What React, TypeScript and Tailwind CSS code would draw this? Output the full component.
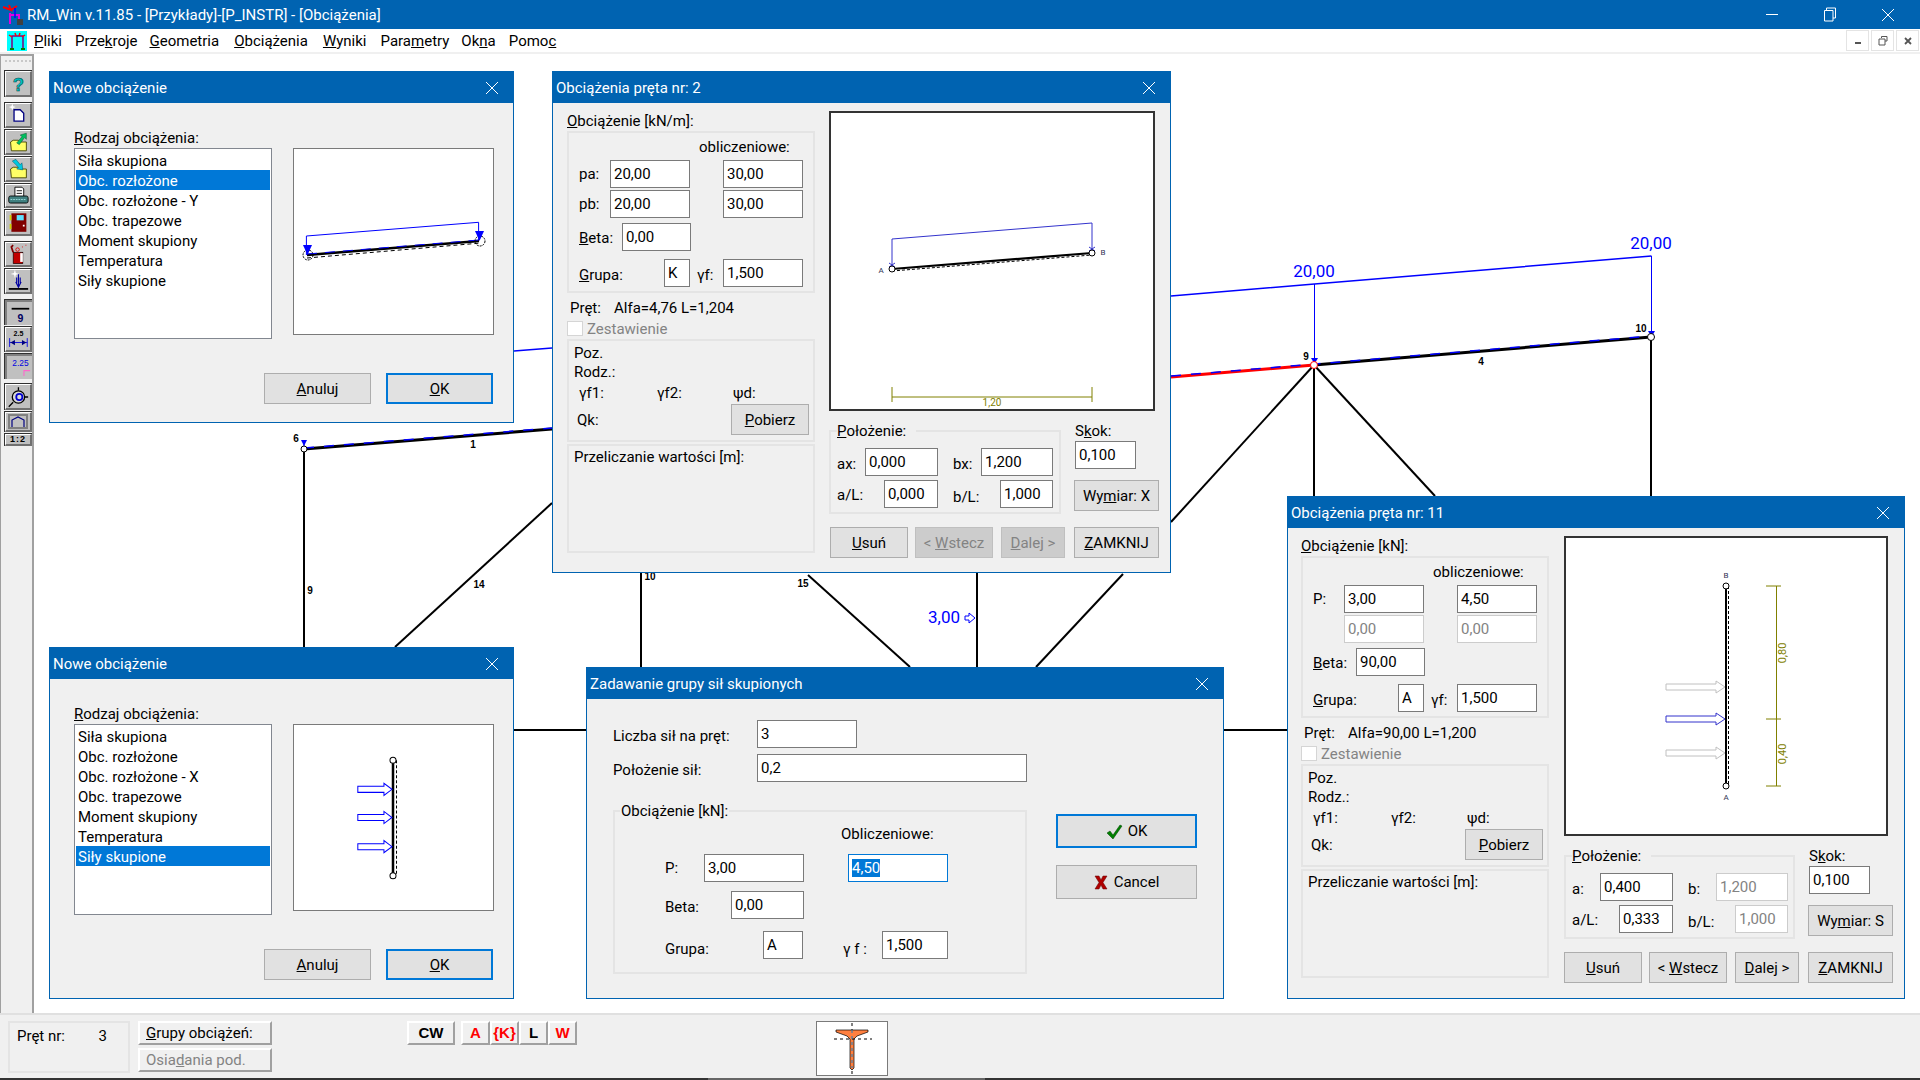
import React from 'react';

const BLUE = '#0000ff';

const Close = () => (
  <svg width="14" height="14" viewBox="0 0 14 14" className="block">
    <path d="M1 1 L13 13 M13 1 L1 13" stroke="white" strokeWidth="1" fill="none" />
  </svg>
);

// Title bar + frame shared by every dialog
const Dialog = ({ className, title, children }: { className: string; title: string; children: React.ReactNode }) => (
  <div className={`absolute bg-[#f0f0f0] border border-[#0063b1] ${className}`}>
    <div className="flex h-[31px] items-center justify-between bg-[#0063b1] pl-[3px] text-[15px] text-white">
      <span className="pt-px">{title}</span>
      <span className="flex w-[42px] justify-center"><Close /></span>
    </div>
    {children}
  </div>
);

const Field = ({ w, value, state, mark }: { w: string; value: string; state?: 'off' | 'focus'; mark?: boolean }) => (
  <div
    className={`h-[28px] shrink-0 border bg-white pl-[3px] leading-[26px] ${w} ${
      state === 'off' ? 'border-[#cccccc] text-[#838383]' : state === 'focus' ? 'border-[#0078d7]' : 'border-[#7a7a7a]'
    }`}
  >
    {mark ? <span className="bg-[#0078d7] text-white">{value}</span> : value}
  </div>
);

const Btn = ({ className, children, off, main }: { className: string; children: React.ReactNode; off?: boolean; main?: boolean }) => (
  <div
    className={`flex shrink-0 items-center justify-center pt-px ${className} ${
      off
        ? 'border border-[#bfbfbf] bg-[#cccccc] text-[#838383]'
        : main
          ? 'border-2 border-[#0078d7] bg-[#e1e1e1]'
          : 'border border-[#adadad] bg-[#e1e1e1]'
    }`}
  >
    {children}
  </div>
);

const Group = ({ className, children }: { className: string; children: React.ReactNode }) => (
  <div className={`relative border-2 border-[#e4e4e4] ${className}`}>{children}</div>
);

const Preview = ({ className, box, children }: { className: string; box: string; children: React.ReactNode }) => (
  <div className={`bg-white ${className}`}>
    <svg viewBox={box} className="block h-full w-full">{children}</svg>
  </div>
);

const arrow = (x0: number, xh: number, xe: number, y: number) =>
  `${x0},${y - 3} ${xh},${y - 3} ${xh},${y - 6} ${xe},${y} ${xh},${y + 6} ${xh},${y + 3} ${x0},${y + 3}`;

const NEW_TYPES_A = ['Siła skupiona', 'Obc. rozłożone', 'Obc. rozłożone - Y', 'Obc. trapezowe', 'Moment skupiony', 'Temperatura', 'Siły skupione'];
const NEW_TYPES_C = ['Siła skupiona', 'Obc. rozłożone', 'Obc. rozłożone - X', 'Obc. trapezowe', 'Moment skupiony', 'Temperatura', 'Siły skupione'];

const NewLoad = ({ className, items, selected, box, children }: { className: string; items: string[]; selected: number; box: string; children: React.ReactNode }) => (
  <Dialog className={`left-[49px] h-[352px] w-[465px] ${className}`} title="Nowe obciążenie">
    <div className="pl-[24px] pt-[25px]">
      <div className="h-[20px] leading-[20px]"><u>R</u>odzaj obciążenia:</div>
      <div className="flex items-start gap-[21px]">
        <div className="h-[191px] w-[198px] border border-[#828790] bg-white p-px">
          {items.map((item, i) => (
            <div key={item} className={`h-[20px] pl-[2px] leading-[22px] ${i === selected ? 'bg-[#0078d7] text-white' : ''}`}>{item}</div>
          ))}
        </div>
        <Preview className="h-[187px] w-[201px] border border-[#7a7a7a]" box={box}>{children}</Preview>
      </div>
      <div className="ml-[190px] mt-[34px] flex gap-[15px]">
        <Btn className="h-[31px] w-[107px]"><span><u>A</u>nuluj</span></Btn>
        <Btn className="h-[31px] w-[107px]" main><span><u>O</u>K</span></Btn>
      </div>
    </div>
  </Dialog>
);

type LoadProps = {
  className: string;
  title: string;
  unit: string;
  sym: [string, string];
  vals: [string, string, string, string];
  second: 'on' | 'off';
  beta: string;
  grupa: string;
  bar: string;
  rightW: string;
  posW: string;
  labels: [string, string];
  pos: [string, string, string, string];
  bOff?: boolean;
  wymiar: string;
  navOff?: boolean;
  box: string;
  pl: string;
  children: React.ReactNode;
};

const LoadWindow = (p: LoadProps) => (
  <Dialog className={p.className} title={p.title}>
    <div className={`flex pt-[8px] ${p.pl}`}>
      {/* Left column */}
      <div className="w-[248px] shrink-0">
        <div className="h-[20px] leading-[20px]"><u>O</u>bciążenie [{p.unit}]:</div>
        <Group className="h-[162px]">
          <div className="pl-[130px] pt-[4px] leading-[20px]">obliczeniowe:</div>
          <div className="mt-[3px] flex items-center pl-[10px]">
            <span className="w-[31px] pt-px">{p.sym[0]}</span>
            <Field w="w-[80px]" value={p.vals[0]} />
            <span className="w-[33px]" />
            <Field w="w-[80px]" value={p.vals[1]} />
          </div>
          <div className="mt-[2px] flex items-center pl-[10px]">
            <span className="w-[31px] pt-px">{p.sym[1]}</span>
            <Field w="w-[80px]" value={p.vals[2]} state={p.second === 'off' ? 'off' : undefined} />
            <span className="w-[33px]" />
            <Field w="w-[80px]" value={p.vals[3]} state={p.second === 'off' ? 'off' : undefined} />
          </div>
          <div className="mt-[5px] flex items-center pl-[10px]">
            <span className="w-[43px] pt-[3px]"><u>B</u>eta:</span>
            <Field w="w-[69px]" value={p.beta} />
          </div>
          <div className="mt-[8px] flex items-center pl-[10px]">
            <span className="w-[85px] pt-[4px]"><u>G</u>rupa:</span>
            <Field w="w-[26px]" value={p.grupa} />
            <span className="w-[33px] pl-[7px] pt-[4px]">γf:</span>
            <Field w="w-[80px]" value="1,500" />
          </div>
        </Group>
        <div className="mt-[5px] flex h-[20px] pl-[3px] leading-[20px]">
          <span className="w-[44px]">Pręt:</span>
          <span>{p.bar}</span>
        </div>
        <div className="mt-[3px] flex h-[15px] items-center">
          <span className="h-[15px] w-[16px] border border-[#d5d5d5] bg-white" />
          <span className="ml-[4px] pt-px text-[#838383]">Zestawienie</span>
        </div>
        <Group className="mt-[3px] h-[103px] pl-[5px] pt-[2px]">
          <div className="h-[20px] leading-[20px]">Poz.</div>
          <div className="h-[19px] leading-[19px]">Rodz.:</div>
          <div className="mt-px flex h-[20px] pl-[5px] leading-[20px]">
            <span className="w-[78px]">γf1:</span>
            <span className="w-[76px]">γf2:</span>
            <span>ψd:</span>
          </div>
          <div className="mt-px flex items-center justify-between pl-[3px] pr-[4px]">
            <span className="pt-[2px]">Qk:</span>
            <Btn className="h-[31px] w-[78px]"><span><u>P</u>obierz</span></Btn>
          </div>
        </Group>
        <Group className="mt-[2px] h-[109px] pl-[5px] pt-px">
          <div className="leading-[20px]">Przeliczanie wartości [m]:</div>
        </Group>
      </div>

      {/* Right column */}
      <div className="ml-[14px] shrink-0">
        <Preview className={`h-[300px] border-2 border-[#333333] ${p.rightW}`} box={p.box}>{p.children}</Preview>
        <div className="mt-[19px] flex">
          <div className={`relative h-[84px] border-2 border-[#e4e4e4] pl-[6px] pt-[16px] ${p.posW}`}>
            <span className="absolute -top-[11px] left-[6px] bg-[#f0f0f0] pr-[10px] leading-[20px]"><u>P</u>ołożenie:</span>
            <div className="flex">
              <div className="flex w-[101px] items-center justify-between">
                <span className="pt-[5px]">{p.labels[0]}:</span>
                <Field w="w-[73px]" value={p.pos[0]} />
              </div>
              <div className="ml-[15px] flex w-[100px] items-center justify-between">
                <span className="pt-[5px]">{p.labels[1]}:</span>
                <Field w="w-[72px]" value={p.pos[1]} state={p.bOff ? 'off' : undefined} />
              </div>
            </div>
            <div className="mt-[3px] flex">
              <div className="flex w-[101px] items-center justify-between">
                <span className="pt-[2px]">a/L:</span>
                <Field w="w-[54px]" value={p.pos[2]} />
              </div>
              <div className="ml-[15px] flex w-[100px] items-center justify-between">
                <span className="pt-[7px]">b/L:</span>
                <Field w="w-[53px]" value={p.pos[3]} state={p.bOff ? 'off' : undefined} />
              </div>
            </div>
          </div>
          <div className="-mt-[9px] ml-[14px]">
            <div className="h-[20px] leading-[20px]">S<u>k</u>ok:</div>
            <Field w="w-[61px]" value="0,100" />
            <Btn className="-ml-px mt-[11px] h-[31px] w-[85px]"><span>Wy<u>m</u>iar: {p.wymiar}</span></Btn>
          </div>
        </div>
        <div className="ml-px mt-[13px] flex">
          <Btn className="h-[31px] w-[78px]"><span><u>U</u>suń</span></Btn>
          <Btn className="ml-[7px] h-[31px] w-[78px]" off={p.navOff}><span>&lt; <u>W</u>stecz</span></Btn>
          <Btn className="ml-[8px] h-[31px] w-[64px]" off={p.navOff}><span><u>D</u>alej &gt;</span></Btn>
          <Btn className="ml-[9px] h-[31px] w-[85px]"><span><u>Z</u>AMKNIJ</span></Btn>
        </div>
      </div>
    </div>
  </Dialog>
);

// Structure drawn behind the dialogs, in page coordinates
const Structure = () => (
  <svg viewBox="34 54 1886 959" className="block h-full w-full">
    <g stroke="#000" strokeWidth="2" fill="none">
      <line x1="304" y1="448" x2="304" y2="647" />
      <line x1="552" y1="503" x2="395" y2="647" />
      <line x1="641" y1="573" x2="641" y2="667" />
      <line x1="808" y1="575" x2="910" y2="667" />
      <line x1="977" y1="573" x2="977" y2="667" />
      <line x1="1123" y1="574" x2="1036" y2="667" />
      <line x1="514" y1="730" x2="586" y2="730" />
      <line x1="1224" y1="730" x2="1287" y2="730" />
      <line x1="1314" y1="365" x2="1171" y2="522" />
      <line x1="1314" y1="365" x2="1314" y2="496" />
      <line x1="1314" y1="365" x2="1435" y2="496" />
      <line x1="1651" y1="337" x2="1651" y2="496" />
    </g>
    <line x1="304" y1="449" x2="552" y2="429" stroke="#000" strokeWidth="3" />
    <line x1="304" y1="448" x2="552" y2="428" stroke={BLUE} strokeWidth="1.5" strokeDasharray="10 10" />
    <line x1="1171" y1="377" x2="1314" y2="365" stroke="#ff0000" strokeWidth="3" />
    <line x1="1314" y1="365" x2="1651" y2="337" stroke="#000" strokeWidth="3" />
    <line x1="1171" y1="376" x2="1651" y2="336" stroke={BLUE} strokeWidth="1.5" strokeDasharray="10 10" />
    <g stroke={BLUE} fill="none">
      <polyline points="514,351 552,348" strokeWidth="1.5" />
      <polyline points="1171,296 1314.5,284 1651.5,256" strokeWidth="1.5" />
      <line x1="304" y1="441" x2="304" y2="448" />
      <line x1="1314.5" y1="284" x2="1314.5" y2="362" />
      <line x1="1651.5" y1="256" x2="1651.5" y2="335" />
    </g>
    <g fill={BLUE}>
      <polygon points="301,440 307,440 304,446" />
      <polygon points="1311,358 1318,358 1314.5,364" />
      <polygon points="1648,331 1655,331 1651.5,337" />
    </g>
    <circle cx="304" cy="449" r="3" fill="#fff" stroke="#000" />
    <circle cx="1314" cy="365" r="3.5" fill="#fff" stroke="#ff0000" />
    <circle cx="1651" cy="337" r="3.5" fill="#fff" stroke="#000" />
    <g fontFamily="Liberation Sans, sans-serif" fontSize="10" fontWeight="700" textAnchor="middle" fill="#000">
      <text x="296" y="442">6</text>
      <text x="473" y="448">1</text>
      <text x="310" y="594">9</text>
      <text x="479" y="588">14</text>
      <text x="650" y="580">10</text>
      <text x="803" y="587">15</text>
      <text x="1306" y="360">9</text>
      <text x="1641" y="332">10</text>
      <text x="1481" y="365">4</text>
    </g>
    <g fontFamily="Roboto, sans-serif" fontSize="17" textAnchor="middle" fill={BLUE}>
      <text x="1314" y="277">20,00</text>
      <text x="1651" y="249">20,00</text>
      <text x="944" y="623">3,00</text>
    </g>
    <polygon points="965,616 969,616 969,613 975,618 969,623 969,620 965,620" fill="none" stroke={BLUE} />
  </svg>
);

// Toolbar icons, drawn on a 24x24 box
const Folder = () => <path d="M3 12 L6 10 H12 L14 12 H21 V22 H4 Z" fill="#ffff66" stroke="#404000" strokeWidth="1" />;
const ICONS: Record<string, React.ReactNode> = {
  help: <text x="12" y="20" textAnchor="middle" fontFamily="Liberation Sans, sans-serif" fontSize="21" fontWeight="700" fill="#00c0c0" stroke="#004040" strokeWidth="0.6">?</text>,
  new: (
    <g>
      <path d="M7 6 H14 L18 10 V19 H7 Z" fill="#fff" stroke="#000080" strokeWidth="1.5" />
      <path d="M5 -1 L6 2 L9 3 L6 4 L5 7 L4 4 L1 3 L4 2 Z" fill="#fff" />
    </g>
  ),
  open: (
    <g>
      <Folder />
      <path d="M10 13 L16 6 L14 4 L21 2 L21 9 L19 7 L13 15 Z" fill="#00c060" stroke="#004020" strokeWidth="0.5" />
    </g>
  ),
  save: (
    <g>
      <Folder />
      <path d="M5 3 L9 1 L14 7 L16 5 L17 13 L10 12 L12 10 Z" fill="#00c8e0" stroke="#004050" strokeWidth="0.5" />
    </g>
  ),
  print: (
    <g>
      <path d="M8 2 H16 L18 4 V13 H8 Z" fill="#fff" stroke="#000" />
      <path d="M10 6 H16 M10 9 H16" stroke="#000" />
      <rect x="1" y="12" width="22" height="8" rx="2" fill="#408080" stroke="#000" />
      <path d="M3 16 H21" stroke="#a0e0e0" strokeDasharray="2 1" />
    </g>
  ),
  door: (
    <g>
      <rect x="4" y="1" width="17" height="21" fill="#800000" />
      <rect x="2" y="3" width="2" height="6" fill="#d0d000" />
      <rect x="2" y="13" width="2" height="6" fill="#d0d000" />
      <rect x="10" y="3" width="8" height="6" fill="#60e0ff" />
      <rect x="17" y="14" width="2" height="2" fill="#fff" />
    </g>
  ),
  load: (
    <g>
      <rect x="6" y="10" width="11" height="13" fill="#c00000" stroke="#000" strokeWidth="0.7" />
      <rect x="14" y="11" width="3" height="10" fill="#fff" />
      <path d="M6 10 L4 4 L6 2" stroke="#800000" strokeWidth="2" fill="none" />
      <circle cx="11" cy="7" r="2" fill="none" stroke="#e00000" />
      <path d="M16 4 h1 M20 2 h1" stroke="#e00000" />
    </g>
  ),
  force: (
    <g>
      <path d="M12 4 V18 M9 13 L12 19 L15 13 M10 8 V14 M14 8 V14" stroke="#0000a0" strokeWidth="1.3" fill="none" />
      <path d="M8 -1 L9 3 L13 4 L9 5 L8 9 L7 5 L3 4 L7 3 Z" fill="#fff" />
      <rect x="1" y="20" width="22" height="2" fill="#000" />
    </g>
  ),
  nine: (
    <g>
      <rect x="2" y="5" width="20" height="2" fill="#000" />
      <text x="12" y="21" textAnchor="middle" fontFamily="Liberation Sans, sans-serif" fontSize="12" fontWeight="700" fill="#000060">9</text>
    </g>
  ),
  dim: (
    <g>
      <text x="12" y="9" textAnchor="middle" fontFamily="Liberation Sans, sans-serif" fontSize="8" fontWeight="700" fill="#000">2.5</text>
      <path d="M2 11 V21 M22 11 V21 M2 16 H22" stroke="#0000e0" strokeWidth="1" />
      <path d="M3 16 L8 13 V19 Z M21 16 L16 13 V19 Z" fill="#000080" />
    </g>
  ),
  val: (
    <g>
      <text x="12" y="10" textAnchor="middle" fontFamily="Liberation Sans, sans-serif" fontSize="9.5" fill="#0000e0">2.25</text>
      <path d="M16 21 V15 H23" stroke="#ff66cc" strokeWidth="1.2" fill="none" />
    </g>
  ),
  zoom: (
    <g>
      <path d="M12 1 V5 M19 12 H23 M6 18 L1 23" stroke="#000" strokeWidth="1.5" />
      <circle cx="12" cy="12" r="7" fill="#d8d8d8" stroke="#000" strokeWidth="1.5" />
      <circle cx="13" cy="12" r="3.5" fill="none" stroke="#0000d0" strokeWidth="2" />
    </g>
  ),
};

const TOOLS = [
  { id: 'help', c: 'mt-0 h-[27px]' },
  { id: 'new', c: 'mt-[5px] h-[26px]' },
  { id: 'open', c: 'mt-px h-[26px]' },
  { id: 'save', c: 'mt-px h-[26px]' },
  { id: 'print', c: 'mt-px h-[25px]' },
  { id: 'door', c: 'mt-px h-[27px]' },
  { id: 'load', c: 'mt-[5px] h-[26px]' },
  { id: 'force', c: 'mt-px h-[26px]' },
  { id: 'nine', c: 'mt-[5px] h-[26px]', down: true },
  { id: 'dim', c: 'mt-px h-[26px]' },
  { id: 'val', c: 'mt-px h-[26px]', down: true },
  { id: 'zoom', c: 'mt-[4px] h-[27px]' },
];

const ToolFrame = ({ c, down, children }: { c: string; down?: boolean; children: React.ReactNode }) => (
  <div className={`w-[28px] border-l border-t border-[#303030] ${c}`}>
    <div
      className={`flex h-full items-center justify-center bg-[#c0c0c0] ${
        down ? 'border-l-2 border-t-2 border-[#808080]' : 'border-b-2 border-l border-r-2 border-t border-b-[#707070] border-l-white border-r-[#707070] border-t-white'
      }`}
    >
      {children}
    </div>
  </div>
);

const Toolbar = () => (
  <div className="h-full w-[34px] shrink-0 border-l border-r-2 border-t-2 border-[#a0a0a0] bg-[#f0f0f0] pl-[3px] pt-[14px]">
    <div className="absolute left-[5px] top-[60px] h-[2px] w-[26px] border-t-2 border-dotted border-[#c8c8c8]" />
    {TOOLS.map((t) => (
      <ToolFrame key={t.id} c={t.c} down={t.down}>
        <svg viewBox="-1 0 25 24" className="h-[22px] w-[22px] overflow-visible">{ICONS[t.id]}</svg>
      </ToolFrame>
    ))}
    <ToolFrame c="mt-px h-[21px]">
      <div className="flex h-[15px] w-[20px] items-center justify-center border-2 border-[#808080]">
        <svg width="14" height="11" viewBox="0 0 14 11"><path d="M1 11 V4 L7 1 L13 4 V11" fill="none" stroke="#000080" strokeWidth="1.2" /></svg>
      </div>
    </ToolFrame>
    <ToolFrame c="mt-px h-[13px]">
      <span className="font-['Liberation_Sans',sans-serif] text-[9px] font-bold tracking-[1px]">1:2</span>
    </ToolFrame>
  </div>
);

const RaisedBtn = ({ className, children }: { className: string; children: React.ReactNode }) => (
  <div className={`flex h-[24px] shrink-0 items-center border-b-2 border-l-2 border-r-2 border-t-2 border-b-[#a0a0a0] border-l-white border-r-[#a0a0a0] border-t-white bg-[#f0f0f0] ${className}`}>
    {children}
  </div>
);

const StatusBar = () => (
  <div className="h-[65px] shrink-0 border-t-2 border-[#e0e0e0] bg-[#f0f0f0] pl-[8px] pt-[6px]">
    <div className="flex items-start">
      <div className="flex h-[52px] w-[122px] justify-between border-2 border-[#e4e4e4] pl-[7px] pr-[21px] pt-[3px] leading-[20px]">
        <span>Pręt nr:</span>
        <span>3</span>
      </div>
      <div className="ml-[8px] flex w-[134px] flex-col gap-[3px]">
        <RaisedBtn className="pl-[6px]"><span><u>G</u>rupy obciążeń:</span></RaisedBtn>
        <RaisedBtn className="pl-[6px] text-[#838383]"><span>Osia<u>d</u>ania pod.</span></RaisedBtn>
      </div>
      <div className="ml-[135px] flex font-['Liberation_Sans',sans-serif] font-bold">
        <RaisedBtn className="w-[48px] justify-center">CW</RaisedBtn>
        <RaisedBtn className="ml-[6px] w-[29px] justify-center text-[#ff0000]">A</RaisedBtn>
        <RaisedBtn className="w-[29px] justify-center text-[#ff0000]">{'{K}'}</RaisedBtn>
        <RaisedBtn className="w-[29px] justify-center">L</RaisedBtn>
        <RaisedBtn className="w-[29px] justify-center text-[#ff0000]">W</RaisedBtn>
      </div>
      <div className="ml-[239px] h-[55px] w-[72px] border border-[#7a7a7a] bg-white">
        <svg viewBox="818 1022 70 53" className="block h-full w-full">
          <line x1="853" y1="1023" x2="853" y2="1075" stroke="#000" strokeDasharray="3 3" />
          <path d="M837 1030 H869 V1032 L858 1036 L855 1039 V1068 L853 1070 L851 1068 V1039 L848 1036 L837 1032 Z" fill="#ff8040" stroke="#000" strokeWidth="0.7" />
          <line x1="835" y1="1039" x2="873" y2="1039" stroke="#000" strokeDasharray="3 3" />
          <line x1="853" y1="1030" x2="853" y2="1068" stroke="#2080c0" strokeDasharray="3 3" />
        </svg>
      </div>
    </div>
  </div>
);

const App = () => (
  <div className="relative flex h-[1080px] w-[1920px] flex-col overflow-hidden bg-white font-['Roboto',sans-serif] text-[15px] text-black">
    {/* Title bar */}
    <div className="flex h-[29px] shrink-0 items-center justify-between bg-[#0063b1] text-white">
      <div className="flex items-center">
        <svg width="24" height="24" viewBox="0 0 24 24" className="ml-[2px]">
          <path d="M1 4 L9 7 L7 2 M9 7 L15 3" stroke="#ff0000" strokeWidth="2" fill="none" />
          <path d="M8 10 V21 M8 12 H17 V20" stroke="#e000e0" strokeWidth="2" fill="none" />
          <path d="M13 5 V15" stroke="#0000ff" strokeWidth="1.5" />
          <rect x="15" y="16" width="6" height="6" fill="#404040" />
        </svg>
        <span className="ml-px pt-px">RM_Win v.11.85 - [Przykłady]-[P_INSTR] - [Obciążenia]</span>
      </div>
      <div className="flex pr-[3px]">
        <div className="flex h-[29px] w-[58px] items-center justify-center">
          <svg width="12" height="2"><rect width="12" height="1" fill="white" /></svg>
        </div>
        <div className="flex h-[29px] w-[58px] items-center justify-center">
          <svg width="14" height="15" viewBox="0 0 14 15"><path d="M3.5 3 V1 H12.5 V11 H10 M1.5 3.5 H10 V14 H1.5 Z" fill="none" stroke="white" /></svg>
        </div>
        <div className="flex h-[29px] w-[58px] items-center justify-center"><Close /></div>
      </div>
    </div>

    {/* Menu */}
    <div className="flex h-[23px] shrink-0 items-center justify-between bg-white">
      <div className="flex items-center">
        <svg width="20" height="20" viewBox="0 0 20 20" className="ml-[7px]">
          <rect width="20" height="20" fill="#00ffff" />
          <path d="M5 18 V5 H16 V18" stroke="#800080" strokeWidth="1.5" fill="none" />
          <path d="M2 4 L5 6 M8 2 L9 5 M13 2 L12 5 M18 4 L15 6" stroke="#ff0000" strokeWidth="1.5" />
          <rect x="3" y="17" width="4" height="2" fill="#008000" />
          <rect x="14" y="17" width="4" height="2" fill="#008000" />
        </svg>
        <div className="ml-[7px] flex gap-[13px] pt-px">
          <span><u>P</u>liki</span>
          <span>Prze<u>k</u>roje</span>
          <span className="-ml-px"><u>G</u>eometria</span>
          <span className="ml-[2px]"><u>O</u>bciążenia</span>
          <span className="ml-[2px]"><u>W</u>yniki</span>
          <span className="ml-px">Para<u>m</u>etry</span>
          <span className="-ml-px">Ok<u>n</u>a</span>
          <span>Pomo<u>c</u></span>
        </div>
      </div>
      <div className="flex gap-[2px] pr-px">
        <div className="flex h-[21px] w-[23px] items-center justify-center border border-[#e4e4e4]">
          <svg width="8" height="8"><rect x="1" y="5" width="6" height="2" fill="#555" /></svg>
        </div>
        <div className="flex h-[21px] w-[23px] items-center justify-center border border-[#e4e4e4]">
          <svg width="10" height="10" viewBox="0 0 10 10"><path d="M3.5 2 V.5 H9 V5 H7 M1 3 H7 V9 H1 Z" fill="none" stroke="#555" /></svg>
        </div>
        <div className="flex h-[21px] w-[23px] items-center justify-center border border-[#e4e4e4]">
          <svg width="8" height="8" viewBox="0 0 8 8"><path d="M1 1 L7 7 M7 1 L1 7" stroke="#555" strokeWidth="1.8" /></svg>
        </div>
      </div>
    </div>
    <div className="h-[2px] shrink-0 bg-[#f0f0f0]" />

    {/* Work area */}
    <div className="flex min-h-0 flex-1">
      <Toolbar />
      <div className="min-w-0 flex-1"><Structure /></div>
    </div>

    <StatusBar />
    <div className="flex h-[2px] shrink-0 bg-[#333333]">
      <div className="ml-[708px] w-[277px] bg-[#666666]" />
    </div>

    {/* Dialogs */}
    <NewLoad className="top-[71px]" items={NEW_TYPES_A} selected={1} box="294 149 199 185">
      <polyline points="306.4,255 306.4,236 478.6,222.3 478.6,240" fill="none" stroke={BLUE} />
      <line x1="307" y1="255" x2="479" y2="241" stroke="#000" strokeWidth="2.5" />
      <line x1="307" y1="254" x2="479" y2="240" stroke={BLUE} strokeWidth="1" strokeDasharray="10 8" />
      <line x1="307" y1="258" x2="481" y2="243" stroke="#000" strokeDasharray="4 3" />
      <circle cx="308" cy="255" r="5" fill="none" stroke="#000" strokeDasharray="2 1" />
      <circle cx="480" cy="241" r="5" fill="none" stroke="#000" strokeDasharray="2 1" />
      <polygon points="303,245 312,245 307.5,255" fill={BLUE} />
      <polygon points="475,231 484,231 479.5,241" fill={BLUE} />
    </NewLoad>
    <NewLoad className="top-[647px]" items={NEW_TYPES_C} selected={6} box="294.5 725 198 184">
      <line x1="393" y1="760" x2="393" y2="875" stroke="#000" strokeWidth="2.5" />
      <line x1="396.5" y1="760" x2="396.5" y2="875" stroke="#000" strokeDasharray="3 2" />
      <circle cx="393" cy="760" r="3" fill="#fff" stroke="#000" />
      <circle cx="393" cy="875" r="3" fill="#fff" stroke="#000" />
      <polygon points={arrow(358, 384, 392, 789)} fill="none" stroke={BLUE} />
      <polygon points={arrow(358, 384, 392, 817)} fill="none" stroke={BLUE} />
      <polygon points={arrow(358, 384, 392, 846)} fill="none" stroke={BLUE} />
    </NewLoad>

    <LoadWindow
      className="left-[552px] top-[71px] h-[502px] w-[619px]"
      pl="pl-[14px]"
      title="Obciążenia pręta nr: 2"
      unit="kN/m"
      sym={['pa:', 'pb:']}
      vals={['20,00', '30,00', '20,00', '30,00']}
      second="on"
      beta="0,00"
      grupa="K"
      bar="Alfa=4,76 L=1,204"
      rightW="w-[326px]"
      posW="w-[232px]"
      labels={['ax', 'bx']}
      pos={['0,000', '1,200', '0,000', '1,000']}
      wymiar="X"
      navOff
      box="831 113 322 296"
    >
      <polyline points="892,269 892,239 1092,223 1092,253" fill="none" stroke="#3333cc" />
      <line x1="892" y1="269" x2="1092" y2="253" stroke="#000" strokeWidth="2.2" />
      <line x1="892" y1="271" x2="1092" y2="255" stroke="#000" strokeDasharray="3 2" />
      <path d="M889 263 L895 267 M895 263 L889 267 M1089 247 L1095 251 M1095 247 L1089 251" stroke="#3333cc" />
      <circle cx="892" cy="269" r="3" fill="#fff" stroke="#000" />
      <circle cx="1092" cy="253" r="3" fill="#fff" stroke="#000" />
      <g fontFamily="Roboto, sans-serif" fontSize="8" fill="#333355" textAnchor="middle">
        <text x="881" y="273">A</text>
        <text x="1103" y="255">B</text>
      </g>
      <path d="M892 387 V402 M1092 387 V402 M892 397 H1092" stroke="#808000" fill="none" />
      <text x="992" y="406" fontFamily="Roboto, sans-serif" fontSize="10" fill="#808000" textAnchor="middle">1,20</text>
    </LoadWindow>

    <LoadWindow
      className="left-[1287px] top-[496px] h-[503px] w-[618px]"
      pl="pl-[13px]"
      title="Obciążenia pręta nr: 11"
      unit="kN"
      sym={['P:', '']}
      vals={['3,00', '4,50', '0,00', '0,00']}
      second="off"
      beta="90,00"
      grupa="A"
      bar="Alfa=90,00 L=1,200"
      rightW="ml-px w-[324px]"
      posW="ml-px w-[231px]"
      labels={['a', 'b']}
      pos={['0,400', '1,200', '0,333', '1,000']}
      bOff
      wymiar="S"
      box="1566 538 320 296"
    >
      <line x1="1726" y1="586" x2="1726" y2="786" stroke="#000" strokeWidth="2" />
      <line x1="1728.5" y1="586" x2="1728.5" y2="786" stroke="#000" strokeDasharray="3 2" />
      <circle cx="1726" cy="586" r="3" fill="#fff" stroke="#000" />
      <circle cx="1726" cy="786" r="3" fill="#fff" stroke="#000" />
      <g fontFamily="Roboto, sans-serif" fontSize="8" fill="#333355" textAnchor="middle">
        <text x="1726" y="578">B</text>
        <text x="1726" y="800">A</text>
      </g>
      <polygon points={arrow(1666, 1716, 1725, 687)} fill="#fff" stroke="#c0c0c0" />
      <polygon points={arrow(1666, 1716, 1725, 719)} fill="#fff" stroke="#3333cc" />
      <polygon points={arrow(1666, 1716, 1725, 753)} fill="#fff" stroke="#c0c0c0" />
      <path d="M1766 586 H1781 M1766 719 H1781 M1766 786 H1781 M1776.5 586 V786" stroke="#808000" fill="none" />
      <g fontFamily="Roboto, sans-serif" fontSize="11" fill="#808000" textAnchor="middle">
        <text transform="translate(1786 653) rotate(-90)">0,80</text>
        <text transform="translate(1786 754) rotate(-90)">0,40</text>
      </g>
    </LoadWindow>

    <Dialog className="left-[586px] top-[667px] h-[332px] w-[638px]" title="Zadawanie grupy sił skupionych">
      <div className="flex pl-[26px]">
        <div className="w-[414px] shrink-0 pt-[21px]">
          <div className="flex items-center">
            <span className="w-[144px] pt-[4px]">Liczba sił na pręt:</span>
            <Field w="w-[100px]" value="3" />
          </div>
          <div className="mt-[6px] flex items-center">
            <span className="w-[144px] pt-[4px]">Położenie sił:</span>
            <Field w="w-[270px]" value="0,2" />
          </div>
          <Group className="mt-[28px] h-[164px] pl-[50px] pt-[12px]">
            <span className="absolute -top-[11px] left-[5px] bg-[#f0f0f0] px-px leading-[20px]">Obciążenie [kN]:</span>
            <div className="pl-[176px] leading-[20px]">Obliczeniowe:</div>
            <div className="mt-[10px] flex">
              <div className="flex w-[139px] items-center justify-between">
                <span className="pt-[1px]">P:</span>
                <Field w="w-[100px]" value="3,00" />
              </div>
              <div className="ml-[44px]"><Field w="w-[100px]" value="4,50" state="focus" mark /></div>
            </div>
            <div className="mt-[9px] flex w-[139px] items-center justify-between">
              <span className="pt-[4px]">Beta:</span>
              <Field w="w-[73px]" value="0,00" />
            </div>
            <div className="mt-[11px] flex">
              <div className="flex w-[138px] items-center justify-between">
                <span className="pt-[8px]">Grupa:</span>
                <Field w="w-[40px]" value="A" />
              </div>
              <div className="ml-[40px] flex w-[105px] items-center justify-between">
                <span className="pt-[8px]">γ f :</span>
                <Field w="w-[66px]" value="1,500" />
              </div>
            </div>
          </Group>
        </div>
        <div className="ml-[29px] pt-[115px]">
          <Btn className="h-[34px] w-[141px]" main>
            <span className="flex items-center gap-[5px]">
              <svg width="17" height="16" viewBox="0 0 17 16"><path d="M1 9 L4 7 L7 11 L14 1 L16 2 L7 15 Z" fill="#008000" stroke="#004000" strokeWidth="0.5" /></svg>
              OK
            </span>
          </Btn>
          <Btn className="mt-[17px] h-[34px] w-[141px]">
            <span className="flex items-center gap-[6px]">
              <svg width="14" height="15" viewBox="0 0 14 15"><path d="M1 1 H5 L7 5 L9 1 H13 L9 7.5 L13 14 H9 L7 10 L5 14 H1 L5 7.5 Z" fill="#b00000" stroke="#600000" strokeWidth="0.5" /></svg>
              Cancel
            </span>
          </Btn>
        </div>
      </div>
    </Dialog>
  </div>
);

export default App;
